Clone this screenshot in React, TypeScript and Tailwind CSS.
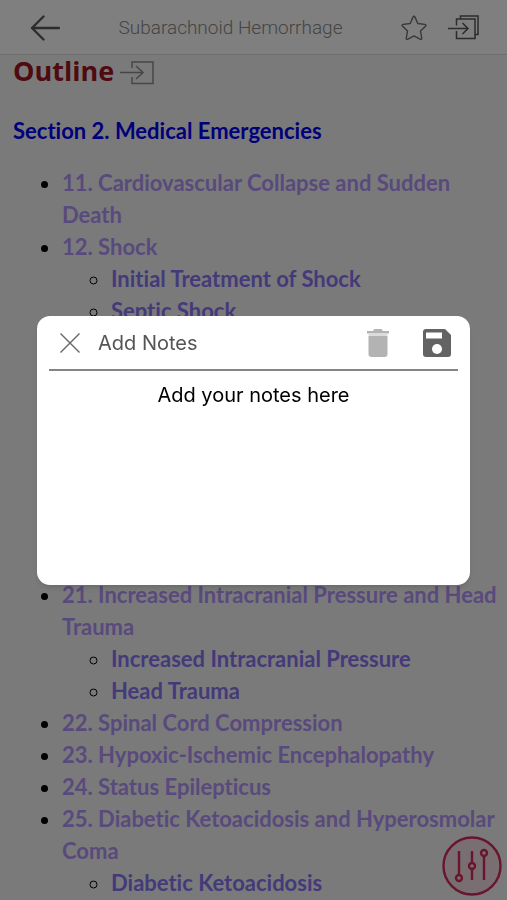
import React from "react";

type Topic = {
  title: string;
  children?: string[];
};

const shockTopics: Topic[] = [
  {
    title: "11. Cardiovascular Collapse and Sudden Death",
  },
  {
    title: "12. Shock",
    children: ["Initial Treatment of Shock", "Septic Shock"],
  },
];

const neuroTopics: Topic[] = [
  {
    title: "21. Increased Intracranial Pressure and Head Trauma",
    children: ["Increased Intracranial Pressure", "Head Trauma"],
  },
  { title: "22. Spinal Cord Compression" },
  { title: "23. Hypoxic-Ischemic Encephalopathy" },
  { title: "24. Status Epilepticus" },
  {
    title: "25. Diabetic Ketoacidosis and Hyperosmolar Coma",
    children: ["Diabetic Ketoacidosis"],
  },
];

function Header() {
  return (
    <header className="flex h-[55px] items-center border-b border-[#dcdcdc] bg-[#fefefe] pl-[30px] pr-[28px] pt-[2px]">
      <button type="button" aria-label="Back">
        <svg width="30" height="26" viewBox="0 0 30 26" fill="none" stroke="#5a5a5a" strokeWidth="2.4" strokeLinecap="round" strokeLinejoin="round">
          <path d="M13.5 1.5 2 13l11.5 11.5M2 13h27" />
        </svg>
      </button>
      <h1 className="flex-1 text-center font-['Roboto','Liberation_Sans',sans-serif] text-[19px] font-light leading-[24px] text-[#8a8a8a]">
        Subarachnoid Hemorrhage
      </h1>
      <div className="flex items-center gap-[21px]">
        <button type="button" aria-label="Bookmark">
          <svg width="26" height="26" viewBox="0 0 26 26" fill="none" stroke="#707070" strokeWidth="1.4" strokeLinejoin="round">
            <path d="M12 2.100q1-1.800 2 0l2.800 6.400 6.900.9q2.100.4.7 1.900l-4.900 4.800 1.200 6.900q.2 2-1.600 1.200L13 20.900l-6.100 3.300q-1.800.8-1.600-1.200l1.200-6.900-4.900-4.800q-1.400-1.500.7-1.900l6.900-.9z" />
          </svg>
        </button>
        <button type="button" aria-label="Add to collection">
          <svg width="31" height="26" viewBox="0 0 31 26" fill="none" stroke="#585858" strokeWidth="1.5">
            <path d="M8.500 10.500V4h18.500v19.500H8.500V16M0 13.500h20M14.500 8l5.500 5.500-5.500 5.500" />
            <path d="M12.500 4V1h17.500v18.500H27" />
          </svg>
        </button>
      </div>
    </header>
  );
}

function TopicList({ topics }: { topics: Topic[] }) {
  return (
    <ul className="list-disc pl-[49px] text-black">
      {topics.map((topic) => (
        <li key={topic.title}>
          <a href="#" className="text-[#b294fa]">
            {topic.title}
          </a>
          {topic.children && (
            <ul className="list-[circle] pl-[49px]">
              {topic.children.map((child) => (
                <li key={child}>
                  <a href="#" className="text-[#8874f5]">
                    {child}
                  </a>
                </li>
              ))}
            </ul>
          )}
        </li>
      ))}
    </ul>
  );
}

function Outline() {
  return (
    <main className="pl-[13px] pr-[4px] font-['Lato','Liberation_Sans',sans-serif] text-[22px] font-bold leading-[32px] [font-variant-ligatures:none]">
      <div className="flex items-center gap-[6px]">
        <h2 className="font-['Open_Sans','Liberation_Sans',sans-serif] text-[27px] font-bold leading-[32px] text-[#a01522]">Outline</h2>
        <button type="button" aria-label="Add outline note" className="pt-[4px]">
          <svg width="34" height="24" viewBox="0 0 34 24" fill="none" stroke="#8c8c8c" strokeWidth="1.5">
            <path d="M12 7V1h21v21.500H12V16M0 11.500h23M16 5l7 6.500L16 18" />
          </svg>
        </button>
      </div>
      <h3 className="mb-[20px] mt-[28px] text-[#0000f5]">Section 2. Medical Emergencies</h3>
      <div className="flex flex-col gap-[252px]">
        <TopicList topics={shockTopics} />
        <TopicList topics={neuroTopics} />
      </div>
    </main>
  );
}

function SettingsButton() {
  return (
    <button type="button" aria-label="Display settings" className="fixed bottom-[4px] right-[5px]">
      <svg width="60" height="60" viewBox="0 0 60 60" fill="none" stroke="#d42a5c" strokeWidth="2.4">
        <circle cx="30" cy="30" r="28.500" fill="#f3dfe4" />
        <path d="M17 15v24M30 15v12M30 33v11M42 20v24" />
        <circle cx="17" cy="42" r="3" />
        <circle cx="30" cy="30" r="3" />
        <circle cx="42" cy="17" r="3" />
      </svg>
    </button>
  );
}

function NotesDialog() {
  return (
    <div className="fixed inset-0 flex items-center bg-black/50 px-[37px]">
      <section
        role="dialog"
        aria-labelledby="notes-title"
        className="w-full rounded-[13px] bg-white px-[12px] font-['Inter','Liberation_Sans',sans-serif] shadow-md"
      >
        <div className="flex h-[55px] items-center border-b-2 border-[#858585] pl-[11px] pr-[7px] pt-[1px]">
          <button type="button" aria-label="Close">
            <svg width="20" height="20" viewBox="0 0 20 20" fill="none" stroke="#666" strokeWidth="1.4">
              <path d="m.5.5 19 19M19.500.5l-19 19" />
            </svg>
          </button>
          <h2 id="notes-title" className="flex-1 pl-[18px] text-[20px] leading-[24px] text-[#555]">
            Add Notes
          </h2>
          <div className="flex items-center gap-[34px]">
            <button type="button" aria-label="Delete note">
              <svg width="22" height="28" viewBox="0 0 22 28" fill="#b3b3b3">
                <path d="M0 2h6l1.500-2h7L16 2h6v2.500H0z" />
                <path d="M1.500 4.500h19V7h-19z" fill="#dcdcdc" />
                <path d="M1.500 7h19v18q0 3-3 3h-13q-3 0-3-3z" />
              </svg>
            </button>
            <button type="button" aria-label="Save note">
              <svg width="28" height="28" viewBox="0 0 28 28">
                <path d="M3 0h19l6 6v19q0 3-3 3H3q-3 0-3-3V3q0-3 3-3z" fill="#636363" />
                <path d="M3 3.500h16v6H3z" fill="#fff" />
                <circle cx="14" cy="20" r="5" fill="#fff" />
              </svg>
            </button>
          </div>
        </div>
        <textarea
          aria-labelledby="notes-title"
          placeholder="Add your notes here"
          className="mt-[12px] block h-[202px] w-full resize-none text-center text-[20px] leading-[24px] text-black outline-none placeholder:text-black"
        />
      </section>
    </div>
  );
}

export default function App() {
  return (
    <div className="h-screen overflow-hidden bg-[#f5f5f5]">
      <Header />
      <Outline />
      <SettingsButton />
      <NotesDialog />
    </div>
  );
}
